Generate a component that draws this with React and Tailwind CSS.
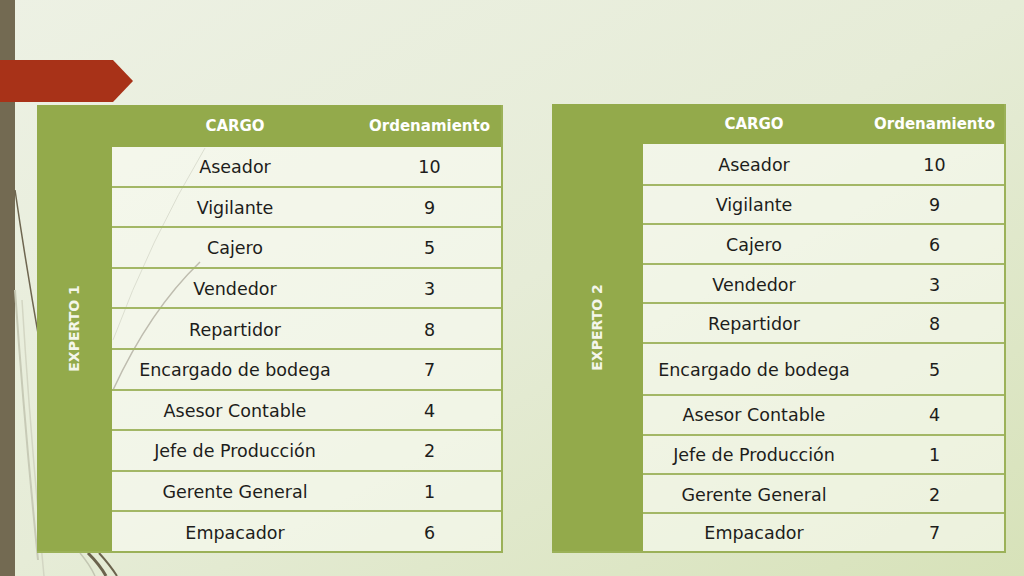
import React from "react";

const expert1 = [
  ["Aseador", "10"],
  ["Vigilante", "9"],
  ["Cajero", "5"],
  ["Vendedor", "3"],
  ["Repartidor", "8"],
  ["Encargado de bodega", "7"],
  ["Asesor Contable", "4"],
  ["Jefe de Producción", "2"],
  ["Gerente General", "1"],
  ["Empacador", "6"],
];

const expert2 = [
  ["Aseador", "10", "h-[40px]"],
  ["Vigilante", "9", "h-[40px]"],
  ["Cajero", "6", "h-[40px]"],
  ["Vendedor", "3", "h-[39px]"],
  ["Repartidor", "8", "h-[40px]"],
  ["Encargado de bodega", "5", "h-[52px]"],
  ["Asesor Contable", "4", "h-[40px]"],
  ["Jefe de Producción", "1", "h-[40px]"],
  ["Gerente General", "2", "h-[39px]"],
  ["Empacador", "7", "h-[39px]"],
];

function ExpertTable({ label, rows, sideW, col1, headerH, className }) {
  return (
    <div className={`relative z-10 flex border-r-2 border-b-2 border-[#9bb158] ${className}`}>
      {/* side label */}
      <div className={`${sideW} bg-[#93aa4b] flex items-center justify-center`}>
        <span className="-rotate-90 whitespace-nowrap text-[14px] font-bold text-[#f4f6ea]">{label}</span>
      </div>
      <div className="flex-1 flex flex-col">
        <div className={`${headerH} bg-[#93aa4b] flex items-center text-white font-bold text-[15px]`}>
          <div className={`${col1} text-center`}>CARGO</div>
          <div className="flex-1 text-center">Ordenamiento</div>
        </div>
        {rows.map(([name, n, h], i) => (
          <div
            key={name}
            className={`${h || "flex-1"} flex items-center pt-[2px] text-[17.5px] text-[#1d1d1b] bg-[#fafbf3]/60 ${i > 0 ? "border-t-2 border-[#a3b766]" : ""}`}
          >
            <div className={`${col1} text-center`}>{name}</div>
            <div className="flex-1 text-center">{n}</div>
          </div>
        ))}
      </div>
    </div>
  );
}

export default function App() {
  return (
    <div
      className="relative w-[1024px] h-[576px] overflow-hidden bg-gradient-to-br from-[#edf1e4] via-[#e6ecd7] to-[#d7e2b9]"
      style={{ fontFamily: '"DejaVu Sans", "Open Sans", sans-serif' }}
    >
      {/* decoration */}
      <svg className="absolute inset-0 z-0" width="1024" height="576">
        <rect x="0" y="0" width="15" height="576" fill="#736a52" />
        <path d="M15 190 Q26 265 40 345" stroke="#6e6650" strokeWidth="1.5" fill="none" />
        <path d="M15 290 Q24 420 38 560" stroke="#c7cab6" strokeWidth="2" fill="none" />
        <path d="M22 300 Q30 430 44 576" stroke="#d3d6c3" strokeWidth="1.5" fill="none" />
        <path d="M113 340 Q150 240 205 148" stroke="#aeb29c" strokeWidth="1" fill="none" />
        <path d="M113 390 Q150 310 200 262" stroke="#655e49" strokeWidth="1.5" fill="none" />
        <path d="M88 553 Q100 565 106 576" stroke="#6b634d" strokeWidth="3" fill="none" />
        <path d="M99 553 Q110 565 117 576" stroke="#6b634d" strokeWidth="2" fill="none" />
        <path d="M80 553 Q90 565 95 576" stroke="#c3c6b2" strokeWidth="1.5" fill="none" />
        <polygon points="0,60 113,60 133,81 113,102 0,102" fill="#a83218" />
      </svg>

      <div className="relative z-10 flex items-start pt-[104px] pl-[37px]">
        <ExpertTable
          label="EXPERTO 1"
          rows={expert1}
          sideW="w-[75px]"
          col1="w-[246px]"
          headerH="h-[42px]"
          className="w-[466px] h-[448px] mt-[1px]"
        />
        <ExpertTable
          label="EXPERTO 2"
          rows={expert2}
          sideW="w-[91px]"
          col1="w-[222px]"
          headerH="h-[40px]"
          className="w-[454px] h-[449px] ml-[49px]"
        />
      </div>
    </div>
  );
}
